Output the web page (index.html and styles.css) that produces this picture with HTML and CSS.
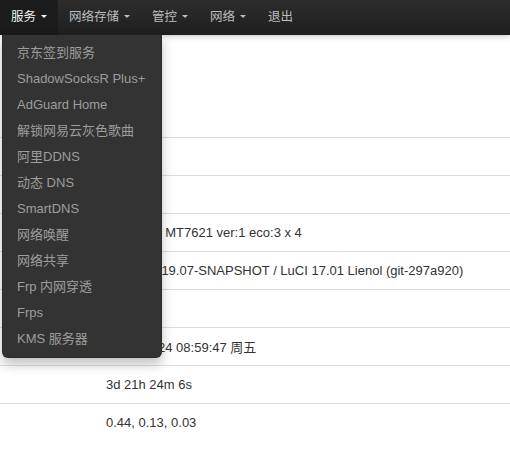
FILE: index.html
```html
<!DOCTYPE html>
<html lang="zh-CN">
<head>
<meta charset="utf-8">
<title>状态 - LuCI</title>
<link rel="stylesheet" href="styles.css">
</head>
<body>
<header class="navbar">
  <ul class="nav">
    <li class="nav-item active">
      <a href="#">服务<span class="caret"></span></a>
      <ul class="dropdown">
        <li><a href="#">京东签到服务</a></li>
        <li><a href="#">ShadowSocksR Plus+</a></li>
        <li><a href="#">AdGuard Home</a></li>
        <li><a href="#">解锁网易云灰色歌曲</a></li>
        <li><a href="#">阿里DDNS</a></li>
        <li><a href="#">动态 DNS</a></li>
        <li><a href="#">SmartDNS</a></li>
        <li><a href="#">网络唤醒</a></li>
        <li><a href="#">网络共享</a></li>
        <li><a href="#">Frp 内网穿透</a></li>
        <li><a href="#">Frps</a></li>
        <li><a href="#">KMS 服务器</a></li>
      </ul>
    </li>
    <li class="nav-item"><a href="#">网络存储<span class="caret"></span></a></li>
    <li class="nav-item"><a href="#">管控<span class="caret"></span></a></li>
    <li class="nav-item"><a href="#">网络<span class="caret"></span></a></li>
    <li class="nav-item"><a href="#">退出</a></li>
  </ul>
</header>
<main class="content">
  <div class="page-head"></div>
  <table class="info">
    <tr><td class="label"></td><td class="value"></td></tr>
    <tr><td class="label"></td><td class="value"></td></tr>
    <tr><td class="label"></td><td class="value">MediaTek MT7621 ver:1 eco:3 x 4</td></tr>
    <tr><td class="label"></td><td class="value">OpenWrt 19.07-SNAPSHOT / LuCI 17.01 Lienol (git-297a920)</td></tr>
    <tr><td class="label"></td><td class="value"></td></tr>
    <tr><td class="label"></td><td class="value">2020-04-24 08:59:47 周五</td></tr>
    <tr><td class="label"></td><td class="value">3d 21h 24m 6s</td></tr>
    <tr><td class="label"></td><td class="value">0.44, 0.13, 0.03</td></tr>
  </table>
</main>
</body>
</html>
```
FILE: styles.css
```css
html, body {
  margin: 0;
  padding: 0;
  background: #fff;
}
body {
  font-family: "Liberation Sans", "Noto Sans CJK SC", sans-serif;
  font-size: 13px;
  color: #333;
}
a {
  text-decoration: none;
}
.navbar {
  position: relative;
  z-index: 10;
  height: 35px;
  background: linear-gradient(#2c2c2c, #1f1f1f);
  box-shadow: 0 1px 6px rgba(0, 0, 0, 0.25);
}
.nav {
  display: flex;
  margin: 0;
  padding: 0;
  list-style: none;
}
.nav-item {
  position: relative;
}
.nav-item > a {
  display: block;
  padding: 0 11px;
  line-height: 35px;
  height: 35px;
  color: #bdbdbd;
  font-size: 12.5px;
}
.nav-item.active > a {
  background: linear-gradient(#1c1c1c, #1b1b1b);
  color: #f2f2f2;
}
.caret {
  display: inline-block;
  width: 0;
  height: 0;
  margin-left: 5px;
  vertical-align: middle;
  border-top: 3.5px solid;
  border-left: 3.5px solid transparent;
  border-right: 3.5px solid transparent;
  position: relative;
  top: -1px;
}
.dropdown {
  position: absolute;
  top: 35px;
  left: 2px;
  width: 158px;
  margin: 0;
  padding: 5px 0;
  list-style: none;
  background: #333;
  border: 1px solid rgba(0, 0, 0, 0.15);
  border-top: 0;
  border-radius: 0 0 6px 6px;
  box-shadow: 0 6px 12px rgba(0, 0, 0, 0.25);
}
.dropdown a {
  display: block;
  padding: 3px 14px;
  line-height: 20px;
  color: #9d9d9d;
  white-space: nowrap;
}
.content {
  position: relative;
  z-index: 1;
}
.page-head {
  height: 102px;
}
.info {
  width: 100%;
  border-collapse: collapse;
}
.info td {
  border-top: 1px solid #ddd;
  height: 37px;
  padding: 0;
  vertical-align: middle;
  white-space: nowrap;
}
.info td.label {
  width: 106px;
}
```
